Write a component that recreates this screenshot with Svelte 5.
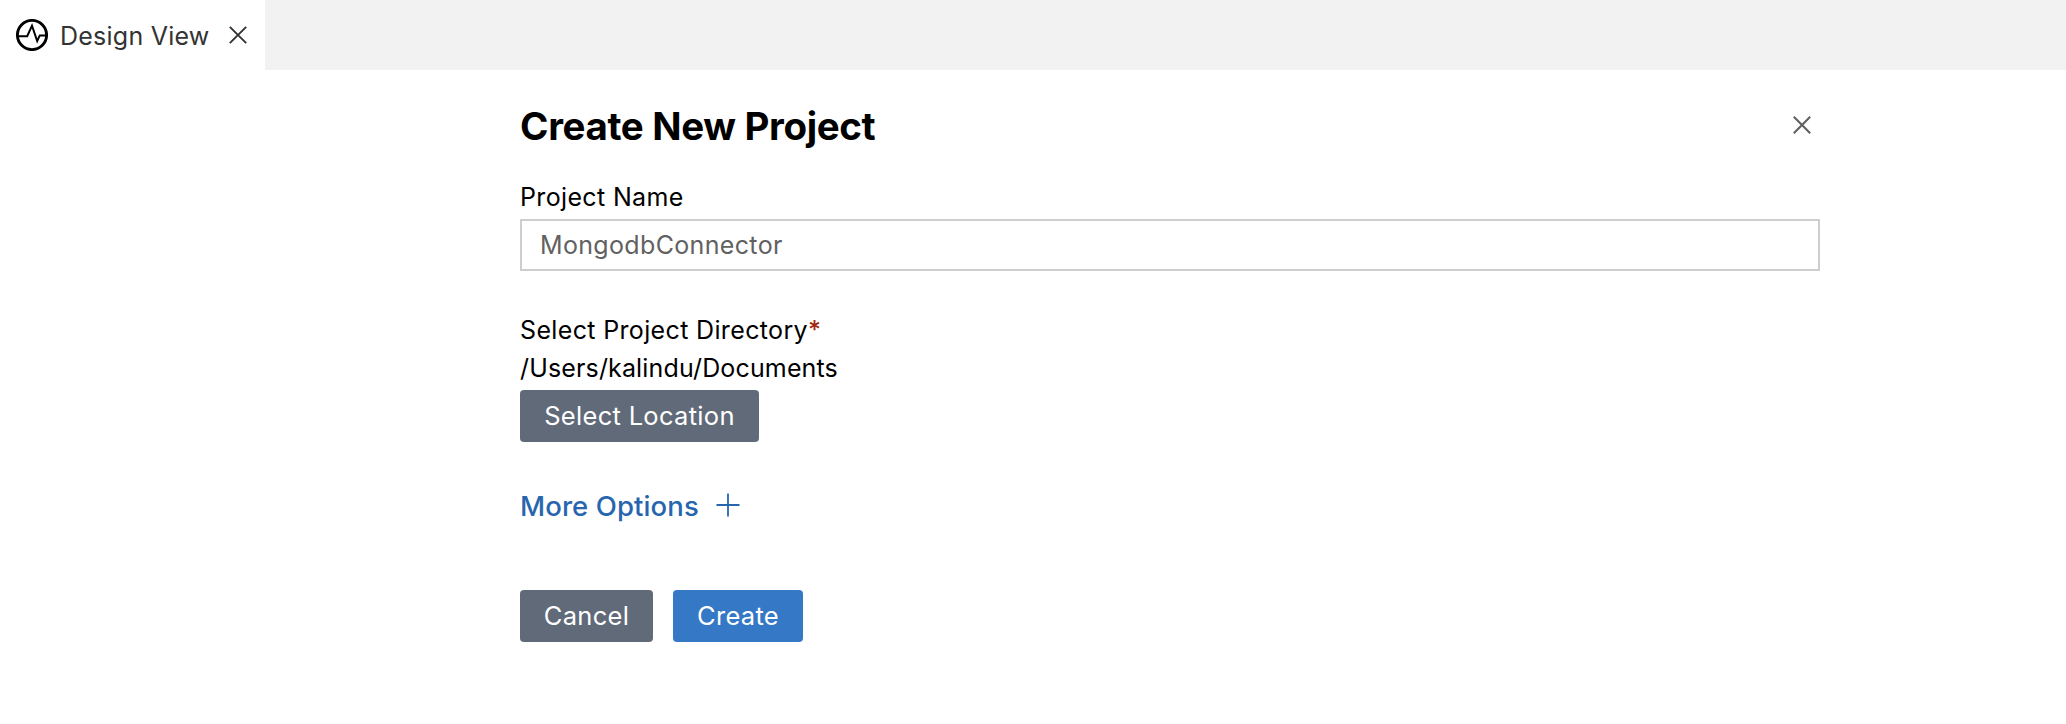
<script>
  let projectName = $state('');
</script>

<header class="tabs">
  <div class="tab">
    <svg class="logo" viewBox="0 0 32 32" fill="none" stroke="#000">
      <circle cx="16" cy="16" r="14.6" stroke-width="2.9" />
      <path d="M2 17.2H11.2L16 6.6L21.2 22L23.8 16.4H30" stroke-width="2" />
    </svg>
    <span class="tab-title">Design View</span>
    <svg class="tab-close" viewBox="0 0 18 18" stroke="#333" stroke-width="1.9"><path d="M.8.8 17.2 17.2M17.2.8.8 17.2" /></svg>
  </div>
</header>

<main class="form">
  <div class="heading">
    <h1>Create New Project</h1>
    <svg class="close" viewBox="0 0 18 18" stroke="#616161" stroke-width="2.1"><path d="M.8.8 17.2 17.2M17.2.8.8 17.2" /></svg>
  </div>

  <label class="label name-label" for="name">Project Name</label>
  <input id="name" class="field" placeholder="MongodbConnector" bind:value={projectName} />

  <div class="label dir-label">Select Project Directory<span class="required">*</span></div>
  <div class="label path">/Users/kalindu/Documents</div>
  <button class="btn select">Select Location</button>

  <div class="more">
    <span>More Options</span>
    <svg class="plus" viewBox="0 0 24 24" stroke="#2766ae" stroke-width="1.8"><path d="M12 .5V23.5M.5 12H23.5" /></svg>
  </div>

  <div class="actions">
    <button class="btn cancel">Cancel</button>
    <button class="btn create">Create</button>
  </div>
</main>

<style>
  :global(body) {
    background: #fff;
    font-family: Inter, sans-serif;
    font-size: 25px;
    color: #000;
  }
  svg {
    display: block;
    flex: none;
  }
  .tabs {
    height: 70px;
    background: #f2f2f2;
    display: flex;
  }
  .tab {
    box-sizing: border-box;
    width: 265px;
    height: 70px;
    padding: 0 18.5px 0 16px;
    background: #fff;
    display: flex;
    align-items: center;
  }
  .logo {
    width: 32px;
    height: 32px;
  }
  .tab-title {
    margin-left: 12px;
    flex: 1;
    color: #333;
    white-space: nowrap;
    line-height: 32px;
    padding-top: 2px;
    letter-spacing: 0.24px;
  }
  .tab-close,
  .close {
    width: 18px;
    height: 18px;
  }
  .form {
    width: 1300px;
    margin-left: 520px;
    padding-top: 32px;
  }
  .heading {
    height: 48px;
    display: flex;
    align-items: center;
    justify-content: space-between;
    padding-right: 9px;
  }
  h1 {
    margin: -1px 0 0;
    font-size: 38.5px;
    line-height: 48px;
    font-weight: 700;
    letter-spacing: -0.35px;
  }
  .close {
    margin-top: -2px;
  }
  .label {
    display: block;
    line-height: 38px;
    height: 38px;
    letter-spacing: 0.35px;
  }
  .name-label {
    margin-top: 28px;
  }
  .field {
    display: block;
    box-sizing: border-box;
    width: 1300px;
    height: 52px;
    margin: 3px 0 0;
    padding: 0 18px;
    border: 2px solid #cecece;
    border-radius: 0;
    outline: none;
    background: #fff;
    font: inherit;
    letter-spacing: 0.34px;
  }
  .field::placeholder {
    color: #616161;
    opacity: 1;
  }
  .dir-label {
    margin-top: 40px;
  }
  .path {
    letter-spacing: 0.15px;
  }
  .required {
    color: #a1260d;
    font-weight: 500;
  }
  .btn {
    box-sizing: border-box;
    height: 52px;
    border: 0;
    border-radius: 4px;
    padding: 0 0 2px;
    background: #616a79;
    color: #fff;
    font: inherit;
    font-size: 25.5px;
    letter-spacing: 0.3px;
    text-align: center;
    white-space: nowrap;
  }
  .select {
    display: block;
    width: 239px;
    margin-top: 3px;
  }
  .more {
    display: flex;
    align-items: center;
    height: 40px;
    margin-top: 44px;
    font-size: 27.5px;
    font-weight: 500;
    letter-spacing: 0.1px;
    color: #2766ae;
  }
  .plus {
    width: 24px;
    height: 24px;
    margin: -2px 0 0 17px;
  }
  .actions {
    display: flex;
    gap: 20px;
    margin-top: 64px;
  }
  .cancel {
    width: 133px;
  }
  .create {
    width: 130px;
    background: #3478c6;
  }
</style>
